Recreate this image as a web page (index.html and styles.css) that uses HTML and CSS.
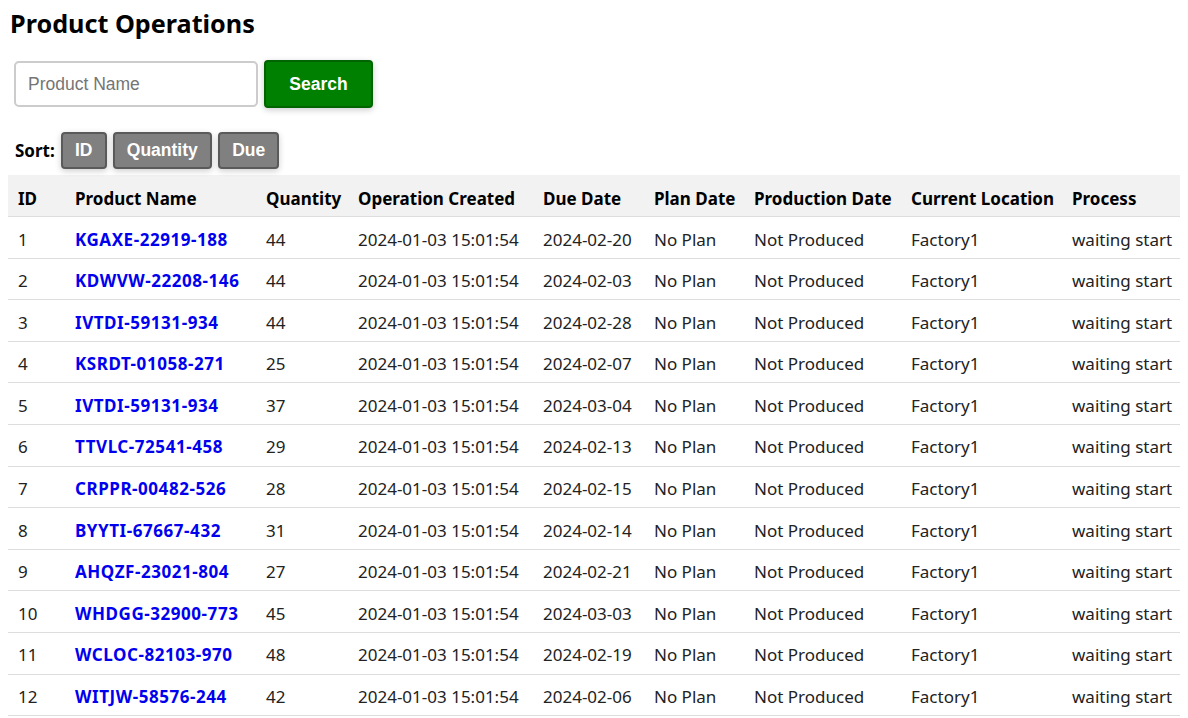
FILE: index.html
```html
<!DOCTYPE html>
<html>
<head>
<meta charset="utf-8">
<link rel="stylesheet" href="styles.css">
</head>
<body>
<h1 class="title">Product Operations</h1>
<div class="search-row">
  <input class="search-input" type="text" placeholder="Product Name">
  <button class="btn btn-search">Search</button>
</div>
<div class="sort-row">
  <span class="sort-label">Sort:</span>
  <button class="btn btn-sort">ID</button>
  <button class="btn btn-sort">Quantity</button>
  <button class="btn btn-sort">Due</button>
</div>
<table class="ops">
  <colgroup>
    <col class="c1"><col class="c2"><col class="c3"><col class="c4"><col class="c5"><col class="c6"><col class="c7"><col class="c8"><col class="c9">
  </colgroup>
  <thead>
    <tr><th>ID</th><th>Product Name</th><th>Quantity</th><th>Operation Created</th><th>Due Date</th><th>Plan Date</th><th>Production Date</th><th>Current Location</th><th>Process</th></tr>
  </thead>
  <tbody>
    <tr><td>1</td><td><a class="plink" href="#">KGAXE-22919-188</a></td><td>44</td><td>2024-01-03 15:01:54</td><td>2024-02-20</td><td>No Plan</td><td>Not Produced</td><td>Factory1</td><td>waiting start</td></tr>
    <tr><td>2</td><td><a class="plink" href="#">KDWVW-22208-146</a></td><td>44</td><td>2024-01-03 15:01:54</td><td>2024-02-03</td><td>No Plan</td><td>Not Produced</td><td>Factory1</td><td>waiting start</td></tr>
    <tr><td>3</td><td><a class="plink" href="#">IVTDI-59131-934</a></td><td>44</td><td>2024-01-03 15:01:54</td><td>2024-02-28</td><td>No Plan</td><td>Not Produced</td><td>Factory1</td><td>waiting start</td></tr>
    <tr><td>4</td><td><a class="plink" href="#">KSRDT-01058-271</a></td><td>25</td><td>2024-01-03 15:01:54</td><td>2024-02-07</td><td>No Plan</td><td>Not Produced</td><td>Factory1</td><td>waiting start</td></tr>
    <tr><td>5</td><td><a class="plink" href="#">IVTDI-59131-934</a></td><td>37</td><td>2024-01-03 15:01:54</td><td>2024-03-04</td><td>No Plan</td><td>Not Produced</td><td>Factory1</td><td>waiting start</td></tr>
    <tr><td>6</td><td><a class="plink" href="#">TTVLC-72541-458</a></td><td>29</td><td>2024-01-03 15:01:54</td><td>2024-02-13</td><td>No Plan</td><td>Not Produced</td><td>Factory1</td><td>waiting start</td></tr>
    <tr><td>7</td><td><a class="plink" href="#">CRPPR-00482-526</a></td><td>28</td><td>2024-01-03 15:01:54</td><td>2024-02-15</td><td>No Plan</td><td>Not Produced</td><td>Factory1</td><td>waiting start</td></tr>
    <tr><td>8</td><td><a class="plink" href="#">BYYTI-67667-432</a></td><td>31</td><td>2024-01-03 15:01:54</td><td>2024-02-14</td><td>No Plan</td><td>Not Produced</td><td>Factory1</td><td>waiting start</td></tr>
    <tr><td>9</td><td><a class="plink" href="#">AHQZF-23021-804</a></td><td>27</td><td>2024-01-03 15:01:54</td><td>2024-02-21</td><td>No Plan</td><td>Not Produced</td><td>Factory1</td><td>waiting start</td></tr>
    <tr><td>10</td><td><a class="plink" href="#">WHDGG-32900-773</a></td><td>45</td><td>2024-01-03 15:01:54</td><td>2024-03-03</td><td>No Plan</td><td>Not Produced</td><td>Factory1</td><td>waiting start</td></tr>
    <tr><td>11</td><td><a class="plink" href="#">WCLOC-82103-970</a></td><td>48</td><td>2024-01-03 15:01:54</td><td>2024-02-19</td><td>No Plan</td><td>Not Produced</td><td>Factory1</td><td>waiting start</td></tr>
    <tr><td>12</td><td><a class="plink" href="#">WITJW-58576-244</a></td><td>42</td><td>2024-01-03 15:01:54</td><td>2024-02-06</td><td>No Plan</td><td>Not Produced</td><td>Factory1</td><td>waiting start</td></tr>
  </tbody>
</table>
</body>
</html>
```
FILE: styles.css
```css
html, body {
  background: #ffffff;
}
body {
  margin: 8px;
  font-family: "Noto Sans", "Noto Sans CJK KR", sans-serif;
  font-size: 17px;
  color: #000;
}
.title {
  margin: 0;
  padding-left: 2px;
  font-size: 25.2px;
  line-height: 30px;
  font-weight: 700;
}
.search-row {
  display: flex;
  align-items: center;
  gap: 6px;
  margin-top: 22px;
  padding-left: 6px;
}
.search-input {
  box-sizing: border-box;
  width: 244px;
  height: 46px;
  border: 2px solid #cccccc;
  border-radius: 5px;
  padding: 0 12px;
  font-family: "Liberation Sans", Arial, sans-serif;
  font-size: 17.5px;
  color: #000;
  outline: none;
}
.search-input::placeholder {
  color: #757575;
}
.btn {
  box-sizing: border-box;
  font-family: "Liberation Sans", Arial, sans-serif;
  font-weight: 700;
  color: #ffffff;
  border-radius: 4px;
  cursor: pointer;
  box-shadow: 0 2px 6px rgba(0, 0, 0, 0.2);
}
.btn-search {
  width: 109px;
  height: 48px;
  background: #008000;
  border: 2px solid #006400;
  font-size: 17.5px;
}
.sort-row {
  display: flex;
  align-items: center;
  gap: 6px;
  margin-top: 24px;
  padding-left: 7px;
}
.sort-label {
  font-weight: 700;
  font-size: 17px;
}
.btn-sort {
  height: 37px;
  background: #808080;
  border: 2px solid #5a5a5a;
  font-size: 17.5px;
  padding: 0 12.2px;
}
.ops {
  margin-top: 6px;
  width: 1173px;
  border-collapse: collapse;
  table-layout: fixed;
}
.c1 { width: 57px; }
.c2 { width: 191px; }
.c3 { width: 92px; }
.c4 { width: 185px; }
.c5 { width: 111px; }
.c6 { width: 100px; }
.c7 { width: 157px; }
.c8 { width: 161px; }
.c9 { width: 119px; }
.ops th, .ops td {
  text-align: left;
  line-height: 20.5px;
  white-space: nowrap;
  border-bottom: 1px solid #dddddd;
  font-size: 17px;
}
.ops th {
  padding: 13.5px 10px 7.5px;
  line-height: 20px;
  background: #f2f2f2;
  font-weight: 700;
}
.ops td {
  padding: 12.5px 10px 7.6px;
  color: #222;
}
.plink {
  color: #0000ee;
  font-weight: 700;
  letter-spacing: 0.55px;
  text-decoration: none;
}
```
